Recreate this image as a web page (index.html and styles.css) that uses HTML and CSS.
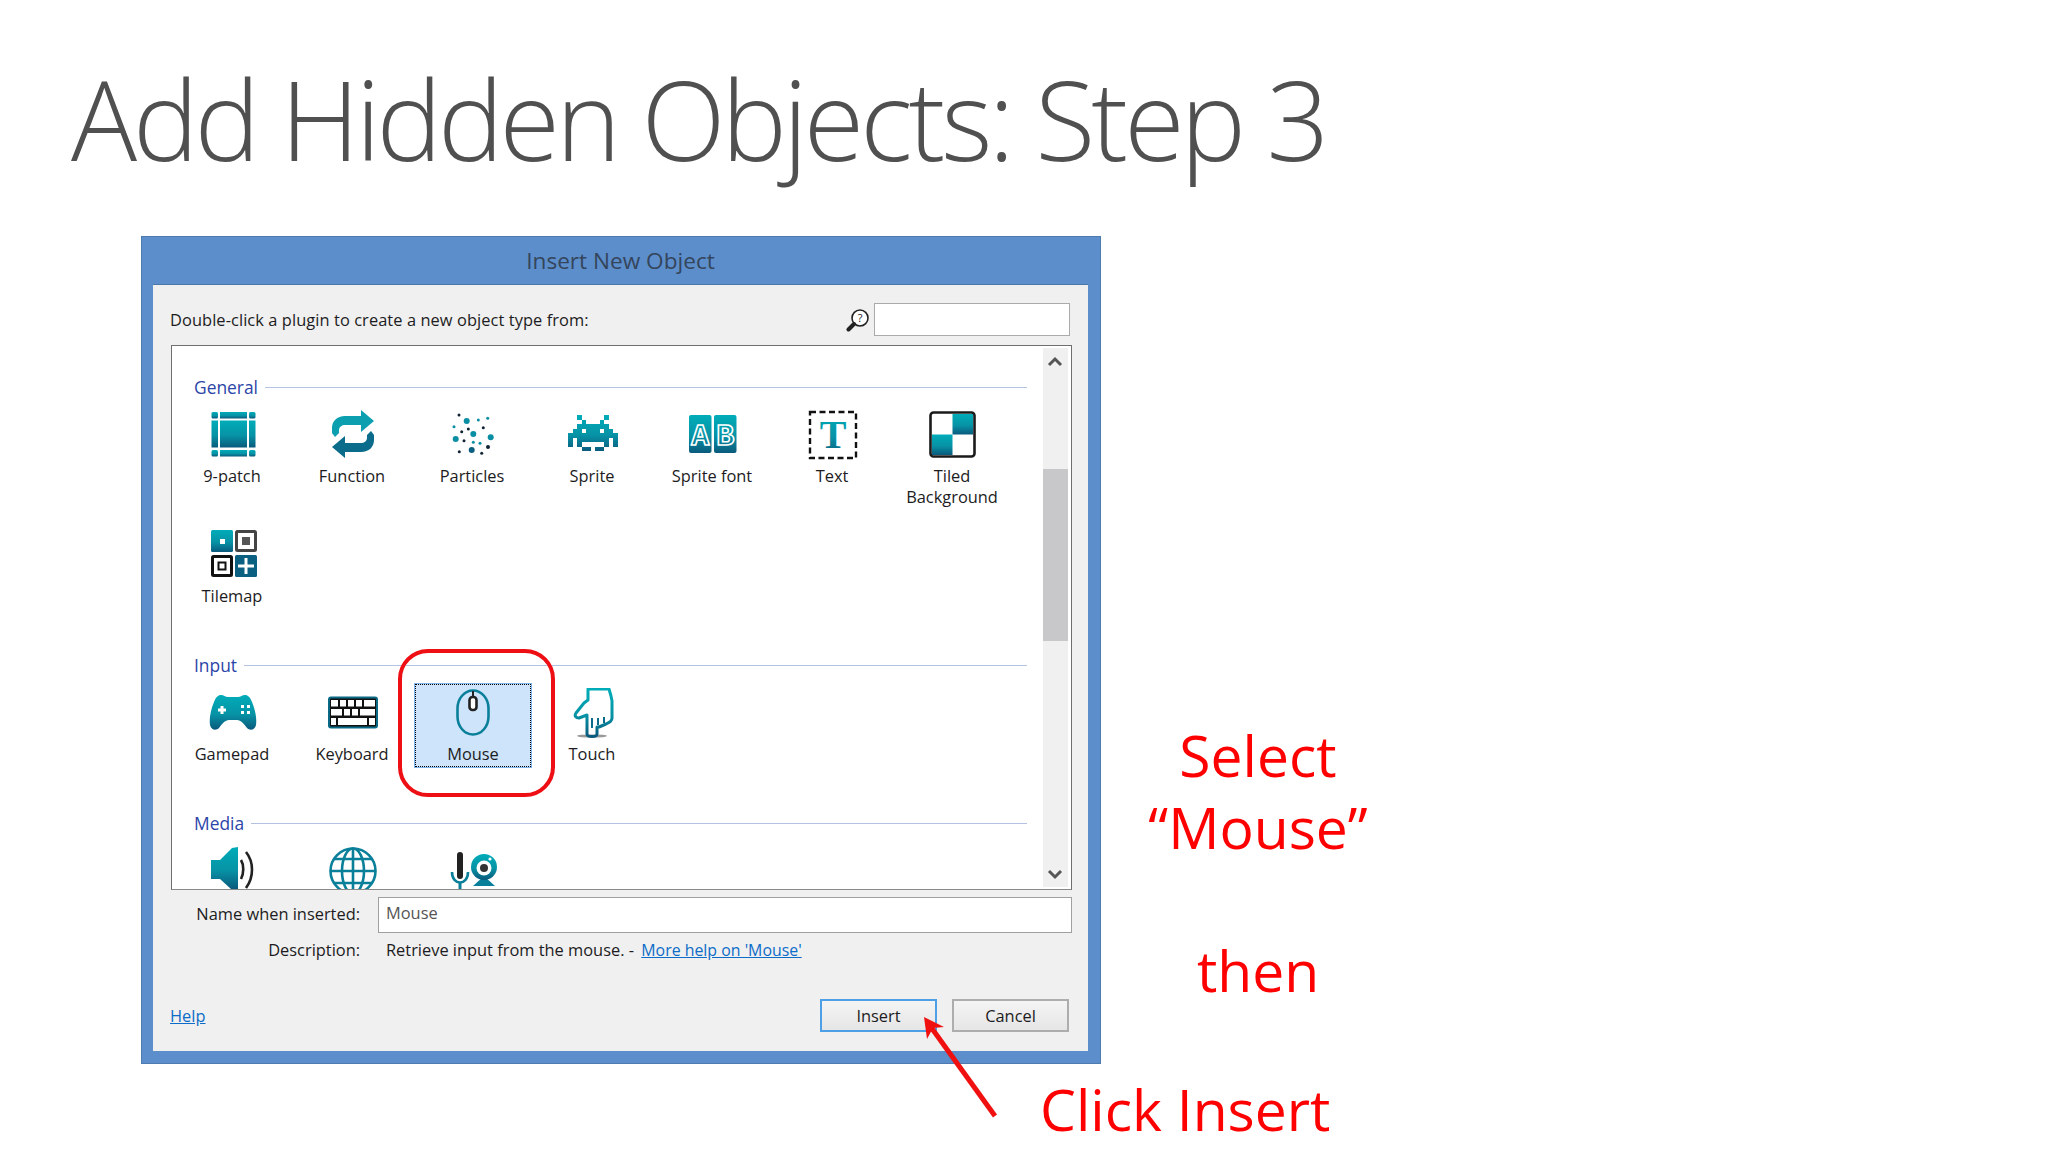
FILE: index.html
```html
<!doctype html>
<html>
	<head>
		<meta charset="utf-8">
		<title>Add Hidden Objects: Step 3</title>
		<link rel="stylesheet" href="styles.css">
	</head>
	<body>
		<svg class="defs" width="0" height="0">
			<defs>
				<linearGradient id="teal" x1="0" y1="0" x2="0" y2="1">
					<stop offset="0" stop-color="#00acb8"/>
					<stop offset="0.55" stop-color="#0793a6"/>
					<stop offset="1" stop-color="#0a5a7c"/>
				</linearGradient>
			</defs>
		</svg>
		<div class="slide">
			<h1 class="slide-title">Add Hidden Objects: Step 3</h1>
			<div class="slide-main">
				<div class="dialog">
					<div class="dialog-title">Insert New Object</div>
					<div class="dialog-body">
						<div class="search-row">
							<span class="hint">Double-click a plugin to create a new object type from:</span>
							<svg class="search-icon" viewBox="0 0 24 24" width="24" height="24">
								<circle cx="14" cy="10" r="8" fill="#fff" stroke="#222" stroke-width="1.6"/>
								<path d="M8 16 L2.5 21.5" stroke="#222" stroke-width="4" stroke-linecap="round"/>
								<text x="14" y="14" class="search-q">?</text>
							</svg>
							<div class="search-input"></div>
						</div>
						<div class="list">
							<div class="list-content">
								<div class="group-head"><span>General</span><i></i></div>
								<div class="items">
									<div class="item">
										<svg viewBox="0 0 50 50" width="50" height="50">
											<g fill="url(#teal)">
												<rect x="3.5" y="2" width="6.5" height="6.5" rx="1.5"/>
												<rect x="12" y="2" width="27" height="6.5"/>
												<rect x="41" y="2" width="6.5" height="6.5" rx="1.5"/>
												<rect x="3.5" y="10.5" width="6.5" height="27"/>
												<rect x="12" y="10.5" width="27" height="27"/>
												<rect x="41" y="10.5" width="6.5" height="27"/>
												<rect x="3.5" y="40" width="6.5" height="6.5" rx="1.5"/>
												<rect x="12" y="40" width="27" height="6.5"/>
												<rect x="41" y="40" width="6.5" height="6.5" rx="1.5"/>
											</g>
										</svg>
										<span>9-patch</span>
									</div>
									<div class="item">
										<svg viewBox="0 0 50 50" width="50" height="50">
											<path fill="#0b9fb0" d="M33 6 H17 C9 6 4 11 4 18 V23 L7 27 L11 23 V20 C11 17 14 15 17 15 H33 V22 L46 11 L33 0 Z"/>
											<path fill="#0a6c8a" d="M17 42 H33 C41 42 46 37 46 30 V25 L43 21 L39 25 V28 C39 31 36 33 33 33 H17 V26 L4 37 L17 48 Z"/>
										</svg>
										<span>Function</span>
									</div>
									<div class="item">
										<svg viewBox="0 0 50 50" width="50" height="50">
											<g fill="#0a8ea3">
												<circle cx="18.7" cy="11" r="3"/><circle cx="30.3" cy="10" r="1.5"/><circle cx="39.7" cy="8.3" r="1.5"/>
												<circle cx="6" cy="16.7" r="1.5"/><circle cx="25.3" cy="24" r="3"/><circle cx="42.7" cy="27.3" r="3"/>
												<circle cx="7.7" cy="29" r="3"/><circle cx="25.3" cy="32.3" r="1.5"/><circle cx="32" cy="33.3" r="1.5"/>
											</g>
											<g fill="#123">
												<circle cx="11" cy="5" r="1.5"/><circle cx="20.3" cy="19" r="1.5"/><circle cx="35.3" cy="17.7" r="1.5"/>
												<circle cx="13.7" cy="21.7" r="1.5"/><circle cx="16" cy="30.7" r="1.5"/><circle cx="11.3" cy="41.7" r="1.5"/>
												<circle cx="40" cy="37" r="2"/><circle cx="33.7" cy="43.3" r="1.5"/>
											</g>
											<circle cx="23.7" cy="40" r="3" fill="#0a5f80"/>
										</svg>
										<span>Particles</span>
									</div>
									<div class="item">
										<svg viewBox="0 -1.1 11 11" width="50" height="50" shape-rendering="crispEdges">
											<path fill="url(#teal)" d="M2 0h1v1h1v1h3v-1h1v-1h1v1h-1v1h1v1h1v1h1v3h-1v-2h-1v2h-1v-1h-5v1h-1v-2h-1v2h-1v-3h1v-1h1v-1h1v-1h-1z M3 7h2v1h-2z M6 7h2v1h-2z M3 3v1h1v-1z M7 3v1h1v-1z" fill-rule="evenodd"/>
										</svg>
										<span>Sprite</span>
									</div>
									<div class="item">
										<svg viewBox="0 0 50 50" width="50" height="50">
											<rect x="1" y="5" width="22.5" height="38" rx="2" fill="url(#teal)"/>
											<rect x="26" y="5" width="22.5" height="38" rx="2" fill="url(#teal)"/>
											<text x="12.3" y="35" class="sprite-letter">A</text>
											<text x="37.3" y="35" class="sprite-letter">B</text>
										</svg>
										<span>Sprite font</span>
									</div>
									<div class="item">
										<svg viewBox="0 0 50 50" width="50" height="50">
											<rect x="2" y="2" width="46" height="46" fill="none" stroke="#111" stroke-width="2.4" stroke-dasharray="6 3.5"/>
											<text x="25" y="38" class="text-letter">T</text>
										</svg>
										<span>Text</span>
									</div>
									<div class="item">
										<svg viewBox="0 0 50 50" width="50" height="50">
											<rect x="2.5" y="2.5" width="44" height="44" rx="3" fill="#fff" stroke="#1b1b1b" stroke-width="2.6"/>
											<rect x="24.5" y="4" width="20.5" height="20.5" fill="url(#teal)"/>
											<rect x="4" y="24.5" width="20.5" height="20.5" fill="url(#teal)"/>
										</svg>
										<span>Tiled Background</span>
									</div>
									<div class="item">
										<svg viewBox="0 0 50 50" width="50" height="50">
											<rect x="3" y="0" width="22" height="22" rx="1.5" fill="url(#teal)"/>
											<rect x="12" y="9" width="5" height="5" fill="#fff"/>
											<rect x="28.5" y="1.5" width="19" height="19" rx="1" fill="#fff" stroke="#444" stroke-width="3"/>
											<rect x="34" y="7" width="8" height="8" fill="#555"/>
											<rect x="4.5" y="26.5" width="19" height="19" rx="1" fill="#fff" stroke="#111" stroke-width="3"/>
											<rect x="10.5" y="32.5" width="7" height="7" fill="none" stroke="#111" stroke-width="2"/>
											<rect x="27" y="25" width="22" height="22" rx="1.5" fill="#0b5f80"/>
											<path d="M38 28 V44 M30 36 H46" stroke="#fff" stroke-width="3"/>
										</svg>
										<span>Tilemap</span>
									</div>
								</div>
								<div class="group-head"><span>Input</span><i></i></div>
								<div class="items">
									<div class="item">
										<svg viewBox="0 0 50 50" width="50" height="50">
											<path fill="url(#teal)" d="M13 7 C10 7 8 9 6 14 C3 21 1 30 2 37 C3 42 8 43 11 40 C14 36 17 32 21 32 H29 C33 32 36 36 39 40 C42 43 47 42 48 37 C49 30 47 21 44 14 C42 9 40 7 37 7 C34 7 33 9 30 9 H20 C17 9 16 7 13 7 Z"/>
											<path d="M14 18 V26 M10 22 H18" stroke="#fff" stroke-width="3"/>
											<path fill="#fff" d="M33 17h3v3h-3z M39 17h3v3h-3z M33 23h3v3h-3z M39 23h3v3h-3z"/>
										</svg>
										<span>Gamepad</span>
									</div>
									<div class="item">
										<svg viewBox="0 0 50 50" width="50" height="50">
											<rect x="1" y="9.5" width="48" height="30" rx="2" fill="#111" stroke="#0a6a85" stroke-width="2"/>
											<g fill="#fff">
												<rect x="3" y="12" width="7" height="6.5"/><rect x="12" y="12" width="6" height="6.5"/><rect x="20" y="12" width="6" height="6.5"/><rect x="28" y="12" width="6" height="6.5"/><rect x="36" y="12" width="11" height="6.5"/>
												<rect x="3" y="21" width="11" height="6.5"/><rect x="16" y="21" width="6" height="6.5"/><rect x="24" y="21" width="6" height="6.5"/><rect x="32" y="21" width="15" height="6.5"/>
												<rect x="3" y="30" width="5" height="7"/><rect x="10" y="30" width="29" height="7"/><rect x="41" y="30" width="6" height="7"/>
											</g>
										</svg>
										<span>Keyboard</span>
									</div>
									<div class="item selected">
										<svg viewBox="0 0 50 50" width="50" height="50">
											<rect x="9.5" y="2.5" width="31" height="44" rx="15.5" ry="18" fill="none" stroke="#0a7f99" stroke-width="2.6"/>
											<path d="M25 3 V9" stroke="#222" stroke-width="2"/>
											<rect x="21.5" y="9" width="7" height="13" rx="3" fill="#fff" stroke="#222" stroke-width="2.6"/>
										</svg>
										<span>Mouse</span>
										<div class="callout"></div>
									</div>
									<div class="item">
										<svg viewBox="0 0 50 50" width="50" height="50">
											<ellipse cx="24" cy="48" rx="15" ry="1.6" fill="#999"/>
											<path fill="none" stroke="url(#teal)" stroke-width="3" stroke-linejoin="round" d="M20 1 H41 L43 8 L44 13 V30 C44 33 42 34 38 36 L31 39 L29 39 V46 C29 48 27 48.5 24 48.5 C21 48.5 19 48 19 46 V27 L11 30 C8 30 6 28 8 25 L16 15 L20 12 Z"/>
											<path d="M24 30 V40 M30 30 V37 M36 29 V35" stroke="#0a6c8a" stroke-width="2"/>
										</svg>
										<span>Touch</span>
									</div>
								</div>
								<div class="group-head"><span>Media</span><i></i></div>
								<div class="items">
									<div class="item">
										<svg viewBox="0 0 50 50" width="50" height="50">
											<path fill="url(#teal)" d="M24 2 L30 1 V43 H23 L12 33 H3 V14 H12 Z"/>
											<path fill="none" stroke="#222" stroke-width="2.6" d="M33 14 C36 19 36 27 33 33 M38 6 C46 16 46 31 38 42"/>
										</svg>
									</div>
									<div class="item">
										<svg viewBox="0 0 50 50" width="50" height="50">
											<g fill="none" stroke="#0a7f99" stroke-width="2.6">
												<circle cx="25" cy="25" r="22.5"/>
												<ellipse cx="25" cy="25" rx="11" ry="22.5"/>
												<path d="M25 2.5 V47.5 M2.5 25 H47.5 M6 13 H44 M6 37 H44"/>
											</g>
										</svg>
									</div>
									<div class="item">
										<svg viewBox="0 0 50 50" width="50" height="50">
											<rect x="9" y="6" width="6" height="27" rx="3" fill="#222"/>
											<path d="M4 26 C4 40 20 40 20 26" fill="none" stroke="#0a7f99" stroke-width="2.6"/>
											<path d="M12 37 V44" stroke="#0a7f99" stroke-width="3"/>
											<path d="M36 30 L47 40 H25 Z" fill="#0a7f99"/>
											<circle cx="36" cy="21" r="13" fill="url(#teal)"/>
											<circle cx="36" cy="22" r="7.5" fill="#fff"/>
											<circle cx="36" cy="22" r="4" fill="#333"/>
											<circle cx="42" cy="13" r="1.6" fill="#fff"/>
										</svg>
									</div>
								</div>
							</div>
							<div class="scrollbar">
								<svg viewBox="0 0 24 14" width="24" height="14"><path d="M6 11 L12 5 L18 11" fill="none" stroke="#555" stroke-width="3"/></svg>
								<div class="scroll-track"><div class="scroll-thumb"></div></div>
								<svg viewBox="0 0 24 14" width="24" height="14"><path d="M6 3 L12 9 L18 3" fill="none" stroke="#555" stroke-width="3"/></svg>
							</div>
						</div>
						<div class="form-row">
							<label class="form-label">Name when inserted:</label>
							<div class="name-input">Mouse</div>
						</div>
						<div class="form-row desc-row">
							<label class="form-label">Description:</label>
							<div class="desc-text">Retrieve input from the mouse. - <a href="#">More help on 'Mouse'</a></div>
						</div>
						<div class="dialog-footer">
							<a href="#" class="help-link">Help</a>
							<div class="buttons">
								<button type="button" class="btn btn-default">Insert</button>
								<button type="button" class="btn">Cancel</button>
							</div>
						</div>
					</div>
				</div>
				<div class="notes">
					<div>Select</div>
					<div>“Mouse”</div>
					<div class="then">then</div>
				</div>
			</div>
			<div class="click-note">Click Insert</div>
			<svg class="arrow" viewBox="0 0 100 120" width="100" height="120">
				<path d="M80 106 L13 13" stroke="#f01010" stroke-width="5" fill="none"/>
				<path d="M9 7 L29 17 L18 18 L12 29 Z" fill="#f01010"/>
			</svg>
		</div>
	</body>
</html>
```

FILE: styles.css
```css
body {
	margin: 0;
	background-color: #fff;
	font-family: "Open Sans", "Liberation Sans", sans-serif;
}
.defs {
	position: absolute;
}
.slide {
	position: relative;
	width: 2048px;
	height: 1152px;
	overflow: hidden;
}
.slide-title {
	margin: 0;
	height: 236px;
	padding-left: 71px;
	box-sizing: border-box;
	color: #505050;
	font-size: 110px;
	font-weight: 300;
	line-height: 236px;
	letter-spacing: -4px;
	white-space: nowrap;
}
.slide-main {
	display: flex;
	padding-left: 141px;
}

/* dialog */
.dialog {
	display: flex;
	flex-direction: column;
	width: 960px;
	height: 828px;
	box-sizing: border-box;
	background-color: #5c8ecb;
	border: 1px solid #4f7cb0;
	padding: 0 12px 12px 11px;
	font-size: 16.4px;
	color: #1c1c22;
}
.dialog-title {
	height: 47px;
	line-height: 47px;
	text-align: center;
	font-size: 22.6px;
	color: #34455c;
}
.dialog-body {
	flex: 1;
	display: flex;
	flex-direction: column;
	background-color: #f0f0f0;
	border-top: 1px solid #4a76a8;
	padding: 18px 16px 0 18px;
}
.search-row {
	display: flex;
	align-items: center;
	height: 33px;
}
.hint {
	flex: 1;
	margin-left: -1px;
	letter-spacing: 0.08px;
}
.search-icon {
	margin-right: 4px;
}
.search-q {
	font-size: 11px;
	text-anchor: middle;
	fill: #222;
}
.search-input {
	width: 194px;
	height: 31px;
	margin-right: 2px;
	background-color: #fff;
	border: 1px solid #aaa;
}

/* plugin list */
.list {
	display: flex;
	height: 545px;
	margin-top: 9px;
	box-sizing: border-box;
	background-color: #fff;
	border: 1px solid #6f6f6f;
	border-bottom-color: #8a8a8a;
	overflow: hidden;
}
.list-content {
	flex: 1;
	padding-top: 29px;
}
.group-head {
	display: flex;
	align-items: center;
	height: 24px;
	margin-bottom: 7px;
	padding-left: 22px;
	padding-right: 16px;
	font-size: 17.4px;
	color: #2c45a8;
}
.group-head i {
	flex: 1;
	height: 1px;
	margin-left: 7px;
	background-color: #b4c3e2;
}
.items {
	display: grid;
	grid-template-columns: repeat(7, 120px);
	grid-auto-rows: 120px;
	margin-bottom: 7px;
}
.item {
	position: relative;
	box-sizing: border-box;
	height: 83px;
	padding-top: 4px;
	text-align: center;
	line-height: 21px;
}
.item svg {
	display: block;
	margin: 0 auto 5px 36px;
}
.item.selected {
	margin-left: 3px;
	width: 116px;
	background-color: #cde4fb;
	border: 1px dotted #000;
	outline: 1px solid #7db4ec;
	padding-top: 3px;
}
.item.selected svg {
	margin-left: 32px;
}
.callout {
	position: absolute;
	top: -36px;
	left: -18px;
	width: 157px;
	height: 148px;
	box-sizing: border-box;
	border: 4px solid #ee0f14;
	border-radius: 30px;
}
.scrollbar {
	display: flex;
	flex-direction: column;
	justify-content: space-between;
	width: 25px;
	margin: 2px 3px 2px 0;
	padding: 6px 0 5px;
	background-color: #f0f0f0;
}
.scroll-track {
	flex: 1;
	padding-top: 101px;
}
.scroll-thumb {
	height: 172px;
	background-color: #c8c8ca;
}

/* form below the list */
.form-row {
	display: flex;
	align-items: center;
	height: 36px;
	margin-top: 7px;
}
.form-label {
	width: 189px;
	margin-bottom: 3px;
	text-align: right;
}
.name-input {
	flex: 1;
	height: 36px;
	margin-left: 18px;
	padding-left: 7px;
	box-sizing: border-box;
	line-height: 30px;
	color: #555;
	background-color: #fff;
	border: 1px solid #a0a0a0;
}
.desc-row {
	height: 22px;
	margin-top: 6px;
}
.desc-row .form-label {
	margin-bottom: 2px;
}
.desc-text {
	margin-left: 26px;
	margin-bottom: 2px;
}
a {
	color: #0c6cc8;
}
.desc-text a {
	margin-left: 3px;
	font-size: 15.9px;
}
.dialog-footer {
	flex: 1;
	display: flex;
	align-items: flex-end;
	justify-content: space-between;
	margin-left: -1px;
	padding: 0 3px 19px 0;
}
.help-link {
	margin-bottom: 5px;
}
.buttons {
	display: flex;
	gap: 15px;
}
.btn {
	width: 117px;
	height: 33px;
	padding: 0;
	font: inherit;
	color: #1c1c22;
	background: linear-gradient(#f4f4f4, #e6e6e6);
	border: 2px solid #adadad;
}
.btn-default {
	border-color: #4d9fe6;
}

/* red notes */
.notes {
	width: 314px;
	padding-top: 483px;
	box-sizing: border-box;
	text-align: center;
	font-size: 57px;
	line-height: 72px;
	color: #fe0000;
}
.then {
	margin-top: 71px;
}
.click-note {
	margin-top: 9px;
	padding-left: 1040px;
	font-size: 57px;
	line-height: 72px;
	color: #fe0000;
}
.arrow {
	position: absolute;
	left: 915px;
	top: 1010px;
}
.sprite-letter {
	font-family: "Liberation Mono", monospace;
	font-size: 30px;
	font-weight: bold;
	text-anchor: middle;
	fill: none;
	stroke: #fff;
	stroke-width: 1.6;
}
.text-letter {
	font-family: "Liberation Serif", serif;
	font-size: 40px;
	font-weight: bold;
	text-anchor: middle;
	fill: url(#teal);
}
```
